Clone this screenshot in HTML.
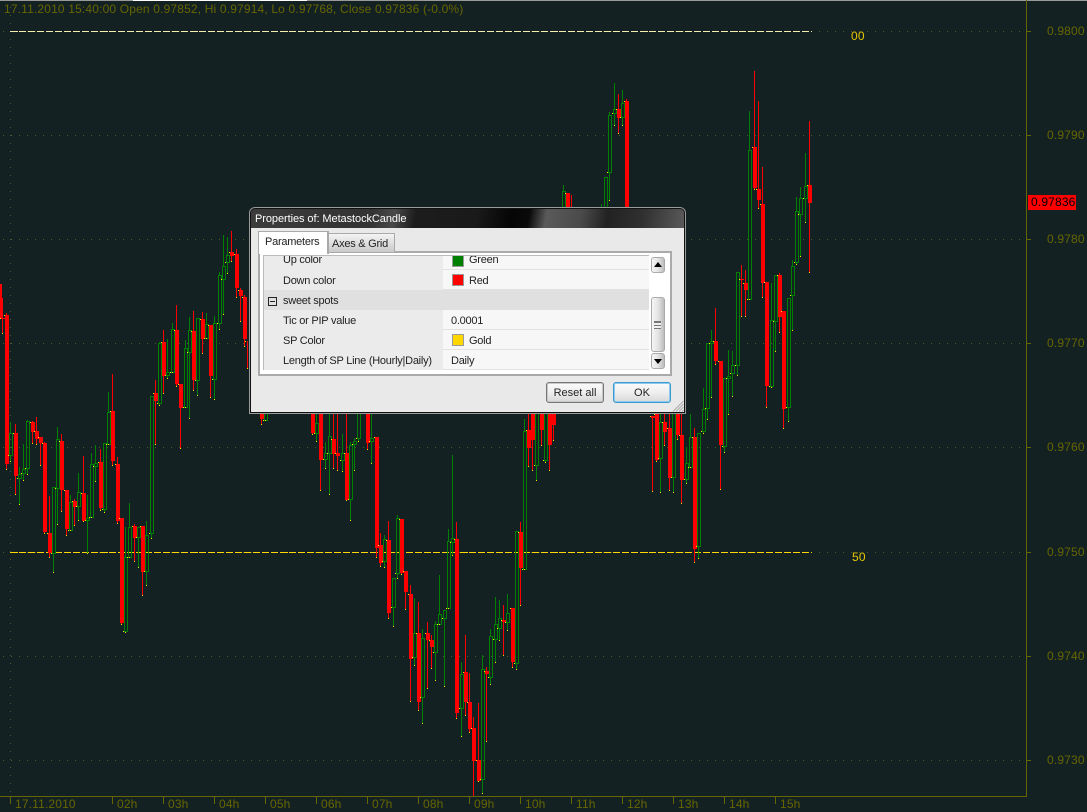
<!DOCTYPE html>
<html><head><meta charset="utf-8"><style>
html,body{margin:0;padding:0;background:#142123;}
#r{position:relative;width:1087px;height:812px;overflow:hidden;background:#142123;font:12px/14px "Liberation Sans",sans-serif;color:#666600;letter-spacing:.16px;}
#r div,#r span{position:absolute;white-space:nowrap;}
svg{position:absolute;left:0;top:0;shape-rendering:crispEdges;}
.d{font-size:11px;line-height:14px;color:#222;letter-spacing:-.25px;}
.sw{width:10px;height:10px;border:1px solid #999;left:452px;}
.sep{left:443px;width:206px;height:1px;background:#e2e2e2;}
.btn{box-sizing:border-box;height:21px;top:382px;border:1px solid #777;border-radius:3px;background:linear-gradient(#fbfbfb,#f0f0f0 45%,#d8d8d8);box-shadow:inset 0 0 0 1px #c8c8c8;text-align:center;font-size:11px;line-height:20px;color:#222;letter-spacing:0;}
.sb{box-sizing:border-box;left:651px;width:14px;border:1px solid #aaa;border-radius:3px;background:linear-gradient(90deg,#f5f5f5,#e4e4e4 50%,#bdbdbd);}
</style></head><body><div id="r">
<div style="left:0;top:0;width:1087px;height:1px;background:#9a9a9a"></div>
<div style="left:133px;top:0;width:174px;height:1px;background:#fff"></div>
<svg id="s" width="1087" height="812" xmlns="http://www.w3.org/2000/svg"></svg>
<div style="left:4px;top:2px">17.11.2010 15:40:00 Open 0.97852, Hi 0.97914, Lo 0.97768, Close 0.97836 (-0.0%)</div>
<div style="left:851px;top:29px;color:#e6c800">00</div>
<div style="left:852px;top:550px;color:#e6c800">50</div>
<div style="left:1047px;top:24px">0.9800</div>
<div style="left:1047px;top:128px">0.9790</div>
<div style="left:1047px;top:232px">0.9780</div>
<div style="left:1047px;top:336px">0.9770</div>
<div style="left:1047px;top:440px">0.9760</div>
<div style="left:1047px;top:545px">0.9750</div>
<div style="left:1047px;top:649px">0.9740</div>
<div style="left:1047px;top:753px">0.9730</div>
<div style="left:1028px;top:195px;width:48px;height:15px;background:#f00;color:#000;line-height:15px;text-indent:3px">0.97836</div>
<div style="left:15px;top:797px">17.11.2010</div>
<div style="left:117px;top:797px">02h</div><div style="left:168px;top:797px">03h</div><div style="left:219px;top:797px">04h</div><div style="left:270px;top:797px">05h</div><div style="left:321px;top:797px">06h</div><div style="left:372px;top:797px">07h</div><div style="left:423px;top:797px">08h</div><div style="left:474px;top:797px">09h</div><div style="left:525px;top:797px">10h</div><div style="left:576px;top:797px">11h</div><div style="left:627px;top:797px">12h</div><div style="left:678px;top:797px">13h</div><div style="left:729px;top:797px">14h</div><div style="left:780px;top:797px">15h</div>

<!-- dialog -->
<div style="left:249px;top:207px;width:437px;height:207px;box-sizing:border-box;background:#111;border-radius:6px 6px 0 0;box-shadow:inset 0 0 0 1px #9a9a9a"></div>
<div style="left:251px;top:209px;width:433px;height:19px;border-radius:4px 4px 0 0;background:linear-gradient(100deg,#3c3c3c 0,#333 28%,#4a4a4a 33%,#1c1c1c 38%,#1a1a1a 52%,#050505 60%,#0a0a0a 64%,#5a5a5a 68%,#4a4a4a 76%,#222 82%,#303030 90%,#5a5a5a 100%)"></div>
<div style="left:255px;top:212px;color:#fff;font-size:11px;letter-spacing:-.07px">Properties of: MetastockCandle</div>
<div style="left:251px;top:228px;width:433px;height:184px;background:#e9e9e9"></div>
<div style="left:258px;top:251px;width:410px;height:121px;border:2px solid #aaa;background:#fff"></div>
<div style="left:328px;top:233px;width:65px;height:18px;border:1px solid #aaa;background:linear-gradient(#f4f4f4,#c9c9c9)"></div>
<div class="d" style="left:332px;top:237px">Axes &amp; Grid</div>
<div style="left:258px;top:231px;width:68px;height:22px;border:1px solid #aaa;border-width:1px 2px 0 1px;background:#fff"></div>
<div class="d" style="left:265px;top:235px">Parameters</div>
<div style="left:263px;top:255px;width:386px;height:1px;background:#bbb"></div>
<div style="left:264px;top:256px;width:179px;height:114px;background:#ebebeb"></div>
<div style="left:443px;top:256px;width:206px;height:114px;background:#f7f7f7"></div>
<div style="left:263px;top:255px;width:1px;height:115px;background:#bbb"></div>
<div style="left:264px;top:290px;width:385px;height:20px;background:#e0e0e0"></div>
<div class="sep" style="top:269px"></div><div class="sep" style="top:289px"></div><div class="sep" style="top:329px"></div><div class="sep" style="top:349px"></div><div class="sep" style="top:369px"></div>
<div style="left:264px;top:256px;width:402px;height:115px;overflow:hidden">
<div class="d" style="left:19px;top:-3px">Up color</div>
<div class="sw" style="left:188px;top:-1px;background:#008000"></div>
<div class="d" style="left:205px;top:-3px">Green</div>
</div>
<div class="d" style="left:283px;top:274px">Down color</div>
<div class="sw" style="top:274px;background:#f00"></div><div class="d" style="left:469px;top:274px">Red</div>
<div style="left:268px;top:297px;width:7px;height:7px;border:1px solid #222"></div><div style="left:270px;top:301px;width:5px;height:1px;background:#222"></div>
<div class="d" style="left:283px;top:294px">sweet spots</div>
<div class="d" style="left:283px;top:314px">Tic or PIP value</div><div class="d" style="left:451px;top:314px">0.0001</div>
<div class="d" style="left:283px;top:334px">SP Color</div>
<div class="sw" style="top:334px;background:#ffd700"></div><div class="d" style="left:469px;top:334px">Gold</div>
<div class="d" style="left:283px;top:354px">Length of SP Line (Hourly|Daily)</div><div class="d" style="left:451px;top:354px">Daily</div>
<div class="sb" style="top:257px;height:16px"></div>
<div style="left:654px;top:262px;width:0;height:0;border:4px solid transparent;border-top:0;border-bottom:5px solid #000"></div>
<div class="sb" style="top:297px;height:55px"></div>
<div style="left:654px;top:321px;width:7px;height:7px;border-top:1px solid #777;background:repeating-linear-gradient(#777 0,#777 1px,#eee 1px,#eee 3px)"></div>
<div class="sb" style="top:353px;height:16px"></div>
<div style="left:654px;top:359px;width:0;height:0;border:4px solid transparent;border-bottom:0;border-top:5px solid #000"></div>
<div class="btn" style="left:546px;width:58px">Reset all</div>
<div class="btn" style="left:613px;width:58px;border-color:#3b9bd0;box-shadow:inset 0 0 0 1px #8ccbee">OK</div>
<svg style="left:672px;top:400px" width="12" height="12"><path d="M11.5 1L1 11.5M11.5 4L4 11.5M11.5 7L7 11.5M11.5 10L10 11.5" stroke="#aaa" fill="none" style="shape-rendering:auto"/></svg>
</div>
<script>
var C=`r,-2,284,318,284,318 r,1,318,319,298,333 r,5,315,464,313,469 g,9,433,455,422,461 r,14,433,476,424,494 g,18,474,478,467,504 g,22,469,473,444,480 g,26,421,468,420,474 r,31,422,432,421,443 r,35,431,439,417,444 r,39,437,443,437,465 r,43,443,532,442,533 r,48,533,553,496,557 g,52,487,553,487,572 g,56,439,488,427,524 r,60,441,490,434,511 r,65,490,529,490,535 g,69,502,530,495,530 r,73,501,507,499,525 g,77,492,506,473,520 r,82,493,521,456,521 g,86,518,520,495,553 g,90,464,517,453,517 g,94,463,466,445,481 r,99,462,508,449,510 g,103,443,509,443,512 g,107,412,444,392,444 r,111,411,461,374,465 r,116,464,521,457,523 r,120,518,623,518,624 g,124,557,631,527,632 g,128,527,557,503,557 r,133,526,538,524,561 g,137,527,537,527,567 r,141,526,572,526,595 g,145,535,571,521,585 g,150,396,533,396,538 r,154,393,401,380,444 g,158,343,403,342,405 r,162,342,376,330,393 g,166,372,375,339,378 g,171,329,372,323,372 r,175,330,384,305,386 r,179,384,408,384,448 g,184,348,407,340,407 g,188,330,352,317,418 r,192,331,380,311,390 g,196,318,380,318,395 r,201,319,339,312,353 g,205,324,338,313,338 r,209,325,376,325,397 g,213,323,379,316,399 g,218,275,323,272,329 g,222,266,279,235,314 g,226,255,262,237,273 r,230,252,256,231,261 r,235,254,288,249,297 r,239,290,296,288,321 r,243,297,339,295,346 r,246,341,341,341,368
r,260,400,419,400,424 g,264,400,420,400,420 r,311,400,433,400,434 g,315,423,433,400,441 r,319,400,460,400,490 g,324,453,459,442,468 g,328,436,453,400,494 r,332,439,454,400,468 r,336,453,456,400,470 g,341,453,460,434,471 r,345,453,500,400,500 g,349,445,499,442,520 g,353,441,444,438,470 g,357,400,438,400,441 r,366,400,443,400,449 g,370,438,441,400,463 r,375,437,548,437,557 r,379,545,563,533,566 g,383,539,561,535,567 r,387,540,613,521,618 g,392,578,607,578,626 g,396,518,573,515,578 r,400,519,573,519,574 r,404,571,592,571,609 r,409,594,659,585,701 g,413,633,657,598,665 r,417,633,702,602,710 g,421,638,697,629,723 r,426,633,640,622,688 r,430,640,647,635,668 g,434,624,652,621,680 g,438,614,624,575,624 g,443,610,618,610,686 g,447,541,608,529,608 g,451,538,542,455,555 r,455,539,713,522,718 g,460,674,708,662,736 r,464,672,702,635,715 r,468,702,729,673,732 r,472,728,761,717,796 r,477,760,781,703,781 g,481,669,779,655,793 r,485,671,674,667,741 g,489,636,677,629,684 g,494,624,639,597,662 g,498,618,628,600,640 r,502,620,622,605,655 g,506,613,622,594,630 r,511,608,662,608,667 g,515,531,663,531,669 r,519,532,568,522,605 g,523,431,569,419,569 r,527,430,448,400,466 r,531,400,440,400,470 g,535,400,465,400,480 r,540,400,430,400,445 g,544,400,460,400,462 r,548,400,445,400,470 r,552,400,425,400,440
g,562,191,300,185,300 r,566,193,300,193,300 r,570,300,300,195,300 g,600,300,300,204,300 g,604,177,300,177,300 g,608,115,172,112,200 g,613,109,113,83,125 r,617,109,118,94,133 g,621,103,117,90,125 r,625,101,300,99,300
r,651,416,418,416,491 r,655,414,460,400,461 g,659,422,458,400,492 r,663,422,432,400,445 r,668,428,478,400,490 g,672,400,477,400,492 r,676,400,435,400,439 r,680,435,480,400,503 g,685,463,479,447,483 g,689,437,467,414,467 r,693,437,549,428,562 g,697,433,546,433,558 g,702,409,431,388,433 g,706,343,408,343,419 g,710,341,343,330,397 r,714,341,361,308,364 r,719,361,445,361,489 g,723,378,446,378,452 g,727,376,378,350,414 g,731,365,373,351,396 g,736,272,365,272,375 r,740,279,280,265,316 r,744,283,290,270,316 g,748,150,299,111,299 r,753,147,188,71,189 r,757,189,200,101,208 r,761,204,283,167,297 r,765,282,386,282,407 g,770,320,386,283,387 g,774,275,321,275,351 r,778,275,317,273,332 r,782,311,409,311,428 g,787,298,407,298,421 g,791,266,295,260,330 g,795,211,262,197,264 g,799,198,214,187,256 g,804,186,198,153,222 r,808,185,203,121,272`;
var o='',R='#f00',G='#008000',Y='#ffe800',dot='#4a5a2c',A='#666600';
function rc(x,y,w,h,c){return '<rect x="'+x+'" y="'+y+'" width="'+w+'" height="'+h+'" fill="'+c+'"/>';}
[31,135,239,343,447,552,656,760].forEach(function(y){for(var x=3;x<1022;x+=8)o+=rc(x,y,1,1,dot);});
for(var y=7;y<796;y+=8)o+=rc(10,y,1,1,dot);
for(var x=10;x<812;x+=9){var w=Math.min(x%90==10?8:7,812-x);o+=rc(x,31,w,1,'#f4eeb0')+rc(x,552,w,1,'#ffd700');}
C.trim().split(/\s+/).forEach(function(s){var a=s.split(','),t=a[0],l=+a[1],b=+a[2],e=+a[3],wt=+a[4],wb=+a[5],c=t=='r'?R:G,wx=l+1;
 if(t=='r'){o+=rc(wx,wt,1,wb-wt,c);if(e>b)o+=rc(l,b,4,e-b,c);}
 else{if(b>wt)o+=rc(wx,wt,1,b-wt,c);if(wb>e)o+=rc(wx,e,1,wb-e,c);o+=rc(l,b,4,1,c)+rc(l,e,4,1,c)+rc(l,b,1,e-b+1,c)+rc(l+3,b,1,e-b+1,c);}
 o+=rc(wx,wb,1,1,Y)+rc(l-1,t=='r'?b:e,1,1,Y);
});
o+=rc(1026,0,1,796,A)+rc(0,796,1027,1,A);
[31,135,239,343,447,552,656,760].forEach(function(y){o+=rc(1026,y,5,1,A);});
[11,113,164,215,266,317,368,419,470,521,572,623,674,725,776].forEach(function(x){o+=rc(x-1,797,1,7,A);});
document.getElementById('s').innerHTML=o;
</script>
</body></html>
